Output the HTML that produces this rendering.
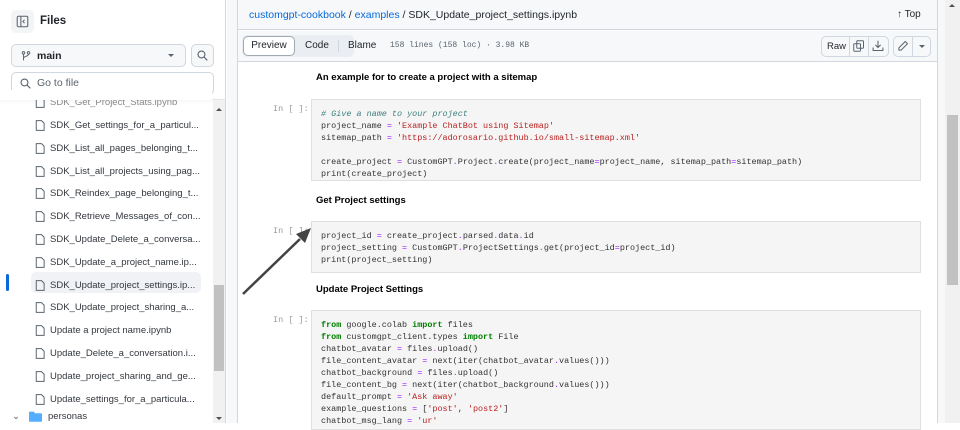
<!DOCTYPE html>
<html><head><style>
*{margin:0;padding:0;box-sizing:border-box}
body{width:960px;height:423px;overflow:hidden;background:#fff;font-family:"Liberation Sans",sans-serif;position:relative;color:#1f2328}
.abs{position:absolute}
.side{left:0;top:0;width:226px;height:423px;background:#fff;border-right:1px solid #d0d7de}
.item{position:absolute;left:34px;font-size:9.5px;color:#33383e;white-space:nowrap}
.item svg{position:absolute;left:0;top:-1px}
.item span{position:absolute;left:16px;top:0}
.mono{font-family:"Liberation Mono",monospace}
.code{position:absolute;left:311px;width:610px;background:#f5f5f5;border:1px solid #e0e0e0;font-family:"Liberation Mono",monospace;font-size:8.45px;line-height:12px;color:#333;padding:8px 9px;white-space:pre}
.prompt{position:absolute;left:273px;font-family:"Liberation Mono",monospace;font-size:8.5px;color:#999}
.md{position:absolute;left:316px;font-size:9.5px;font-weight:bold;color:#000}
.k{color:#008000;font-weight:bold}.s{color:#ba2121}.c{color:#408080;font-style:italic}.o{color:#aa22ff}
</style></head><body>
<div class="abs side">
 <div class="abs" style="left:11px;top:10px;width:23px;height:23px;background:#f3f4f6;border-radius:5px"></div>
 <svg class="abs" style="left:16px;top:15px" width="13" height="13" viewBox="0 0 16 16"><rect x="1.5" y="1.5" width="13" height="13" rx="1.5" fill="none" stroke="#59636e" stroke-width="1.3"/><line x1="6" y1="2" x2="6" y2="14" stroke="#59636e" stroke-width="1.3"/><path d="M10.5 6 L8.5 8 L10.5 10" fill="none" stroke="#59636e" stroke-width="1.2"/></svg>
 <div class="abs" style="left:40px;top:15px;font-size:11.5px;font-weight:bold">Files</div>
 <div class="abs" style="left:11px;top:44px;width:175px;height:23px;background:#f6f8fa;border:1px solid #d0d7de;border-radius:5px"></div>
 <svg class="abs" style="left:21px;top:51px" width="10" height="10" viewBox="0 0 16 16"><circle cx="4" cy="3" r="2" fill="none" stroke="#59636e" stroke-width="1.5"/><circle cx="12" cy="3" r="2" fill="none" stroke="#59636e" stroke-width="1.5"/><path d="M4 5v10M12 5c0 4-8 3-8 7" fill="none" stroke="#59636e" stroke-width="1.5"/></svg>
 <div class="abs" style="left:37px;top:50px;font-size:10.5px;font-weight:bold">main</div>
 <div class="abs" style="left:168px;top:54px;border-left:3px solid transparent;border-right:3px solid transparent;border-top:3px solid #59636e"></div>
 <div class="abs" style="left:191px;top:44px;width:23px;height:23px;background:#f6f8fa;border:1px solid #d0d7de;border-radius:5px"></div>
 <svg class="abs" style="left:197px;top:50px" width="11" height="11" viewBox="0 0 16 16"><circle cx="6.5" cy="6.5" r="5" fill="none" stroke="#59636e" stroke-width="1.6"/><line x1="10" y1="10" x2="15" y2="15" stroke="#59636e" stroke-width="1.6"/></svg>
 <div class="abs" style="left:11px;top:72px;width:203px;height:23px;border:1px solid #d0d7de;border-radius:5px"></div>
 <svg class="abs" style="left:20px;top:78px" width="11" height="11" viewBox="0 0 16 16"><circle cx="6.5" cy="6.5" r="5" fill="none" stroke="#59636e" stroke-width="1.6"/><line x1="10" y1="10" x2="15" y2="15" stroke="#59636e" stroke-width="1.6"/></svg>
 <div class="abs" style="left:37px;top:77px;font-size:10.5px;color:#59636e">Go to file</div>
 <div class="abs" style="left:0;top:99px;width:226px;height:1px;background:#e5e7eb;box-shadow:0 1px 3px rgba(0,0,0,.12)"></div>
 <div class="abs" style="left:213px;top:100px;width:12px;height:323px;background:#f1f1f1"></div>
 <div class="abs" style="left:214px;top:285px;width:10px;height:86px;background:#c1c1c1"></div>
 <div class="abs" style="left:216px;top:108px;border-left:3px solid transparent;border-right:3px solid transparent;border-bottom:3px solid #505050"></div>
 <div class="abs" style="left:216px;top:417px;border-left:3px solid transparent;border-right:3px solid transparent;border-top:3px solid #505050"></div>
 <div class="abs" style="left:31px;top:272px;width:170px;height:21px;background:#f0f2f5;border-radius:5px"></div>
 <div class="abs" style="left:6px;top:274px;width:3px;height:17px;background:#0969da;border-radius:2px"></div>
</div>
<div id="items"></div>
<div class="abs" style="left:227px;top:0;width:733px;height:423px;background:#f6f8fa"></div>
<div class="abs" style="left:237px;top:0;width:701px;height:423px;background:#fff;border-left:1px solid #d0d7de;border-right:1px solid #d0d7de"></div>
<div class="abs" style="left:238px;top:0;width:699px;height:30px;background:#f6f8fa;border-bottom:1px solid #d0d7de"></div>
<div class="abs" style="left:249px;top:9px;font-size:10.5px;color:#1f2328"><span style="color:#0969da">customgpt-cookbook</span> / <span style="color:#0969da">examples</span> / SDK_Update_project_settings.ipynb</div>
<div class="abs" style="left:897px;top:9px;font-size:10px">↑ Top</div>
<div class="abs" style="left:238px;top:31px;width:699px;height:31px;background:#f6f8fa;border-bottom:1px solid #d0d7de"></div>
<div class="abs" style="left:242px;top:35px;width:112px;height:22px;background:#eaeef2;border-radius:5px"></div>
<div class="abs" style="left:243px;top:36px;width:52px;height:20px;background:#fff;border:1px solid #a0a8b0;border-radius:5px;font-size:10px;text-align:center;line-height:18px">Preview</div>
<div class="abs" style="left:305px;top:40px;font-size:10px;color:#1f2328">Code</div>
<div class="abs" style="left:338px;top:40px;width:1px;height:12px;background:#d0d7de"></div>
<div class="abs" style="left:348px;top:40px;font-size:10px">Blame</div>
<div class="abs mono" style="left:390px;top:41px;font-size:8px;color:#59636e">158 lines (158 loc) · 3.98 KB</div>
<div class="abs" style="left:821px;top:36px;width:68px;height:21px;border:1px solid #d0d7de;border-radius:5px;background:#f6f8fa"></div>
<div class="abs" style="left:849px;top:36px;width:1px;height:21px;background:#d0d7de"></div>
<div class="abs" style="left:868px;top:36px;width:1px;height:21px;background:#d0d7de"></div>
<div class="abs" style="left:827px;top:41px;font-size:9.5px">Raw</div>
<svg class="abs" style="left:853px;top:40px" width="12" height="12" viewBox="0 0 16 16"><rect x="1" y="5" width="9" height="10" rx="1" fill="none" stroke="#59636e" stroke-width="1.3"/><rect x="5" y="1" width="9" height="10" rx="1" fill="none" stroke="#59636e" stroke-width="1.3"/></svg>
<svg class="abs" style="left:872px;top:40px" width="12" height="12" viewBox="0 0 16 16"><path d="M8 1v9M4.5 6.5 8 10l3.5-3.5M1.5 10v4h13v-4" fill="none" stroke="#59636e" stroke-width="1.4"/></svg>
<div class="abs" style="left:893px;top:36px;width:38px;height:21px;border:1px solid #d0d7de;border-radius:5px;background:#f6f8fa"></div>
<div class="abs" style="left:912px;top:36px;width:1px;height:21px;background:#d0d7de"></div>
<svg class="abs" style="left:897px;top:40px" width="12" height="12" viewBox="0 0 16 16"><path d="M11 2l3 3-8.5 8.5H2.5v-3z" fill="none" stroke="#59636e" stroke-width="1.3"/></svg>
<div class="abs" style="left:919px;top:45px;border-left:3px solid transparent;border-right:3px solid transparent;border-top:3px solid #59636e"></div>
<div class="abs" style="left:945px;top:0;width:15px;height:423px;background:#f1f1f1"></div>
<div class="abs" style="left:949px;top:4px;border-left:3px solid transparent;border-right:3px solid transparent;border-bottom:3px solid #505050"></div>
<div class="abs" style="left:947px;top:115px;width:11px;height:170px;background:#c1c1c1"></div>

<div class="md" style="top:72px">An example for to create a project with a sitemap</div>
<div class="prompt" style="top:104px">In [ ]:</div>
<div class="code" style="top:99px;height:82px"><span class="c"># Give a name to your project</span>
project_name <span class="o">=</span> <span class="s">'Example ChatBot using Sitemap'</span>
sitemap_path <span class="o">=</span> <span class="s">'https://adorosario.github.io/small-sitemap.xml'</span>

create_project <span class="o">=</span> CustomGPT<span class="o">.</span>Project<span class="o">.</span>create(project_name<span class="o">=</span>project_name, sitemap_path<span class="o">=</span>sitemap_path)
print(create_project)</div>
<div class="md" style="top:195px">Get Project settings</div>
<div class="prompt" style="top:226px">In [ ]:</div>
<div class="code" style="top:221px;height:52px">project_id <span class="o">=</span> create_project<span class="o">.</span>parsed<span class="o">.</span>data<span class="o">.</span>id
project_setting <span class="o">=</span> CustomGPT<span class="o">.</span>ProjectSettings<span class="o">.</span>get(project_id<span class="o">=</span>project_id)
print(project_setting)</div>
<div class="md" style="top:284px">Update Project Settings</div>
<div class="prompt" style="top:315px">In [ ]:</div>
<div class="code" style="top:310px;height:120px"><span class="k">from</span> google.colab <span class="k">import</span> files
<span class="k">from</span> customgpt_client.types <span class="k">import</span> File
chatbot_avatar <span class="o">=</span> files<span class="o">.</span>upload()
file_content_avatar <span class="o">=</span> next(iter(chatbot_avatar<span class="o">.</span>values()))
chatbot_background <span class="o">=</span> files<span class="o">.</span>upload()
file_content_bg <span class="o">=</span> next(iter(chatbot_background<span class="o">.</span>values()))
default_prompt <span class="o">=</span> <span class="s">'Ask away'</span>
example_questions <span class="o">=</span> [<span class="s">'post'</span>, <span class="s">'post2'</span>]
chatbot_msg_lang <span class="o">=</span> <span class="s">'ur'</span></div>
<svg class="abs" style="left:0;top:0" width="960" height="423"><line x1="243" y1="294" x2="300" y2="239" stroke="#444" stroke-width="2.5"/><path d="M311 228 L296 234 L305 243 Z" fill="#444"/></svg>

<div class="item" style="top:97px;color:#888"><svg width="12" height="13" viewBox="0 0 16 16"><path d="M3 1.5h7l3.5 3.5v9.5h-10.5z" fill="none" stroke="#59636e" stroke-width="1.3"/></svg><span>SDK_Get_Project_Stats.ipynb</span></div>
<div class="abs" style="left:0;top:90px;width:212px;height:10px;background:#fff"></div>
<script>
var n=["SDK_Get_settings_for_a_particul...","SDK_List_all_pages_belonging_t...","SDK_List_all_projects_using_pag...","SDK_Reindex_page_belonging_t...","SDK_Retrieve_Messages_of_con...","SDK_Update_Delete_a_conversa...","SDK_Update_a_project_name.ip...","SDK_Update_project_settings.ip...","SDK_Update_project_sharing_a...","Update a project name.ipynb","Update_Delete_a_conversation.i...","Update_project_sharing_and_ge...","Update_settings_for_a_particula..."];
var h="";for(var i=0;i<n.length;i++){h+='<div class="item" style="top:'+(120+i*22.8)+'px"><svg width="12" height="13" viewBox="0 0 16 16"><path d="M3 1.5h7l3.5 3.5v9.5h-10.5z" fill="none" stroke="#59636e" stroke-width="1.3"/></svg><span>'+n[i]+'</span></div>';}
h+='<div class="item" style="top:411px;left:12px"><span style="left:0;color:#59636e">&#8964;</span><svg style="left:17px;top:0" width="13" height="11" viewBox="0 0 16 13"><path d="M0 1.5a1 1 0 0 1 1-1h5l1.5 2h7.5a1 1 0 0 1 1 1v8.5a1 1 0 0 1-1 1h-14a1 1 0 0 1-1-1z" fill="#54aeff"/></svg><span style="left:36px">personas</span></div>';
document.getElementById("items").innerHTML=h;
</script>
</body></html>
